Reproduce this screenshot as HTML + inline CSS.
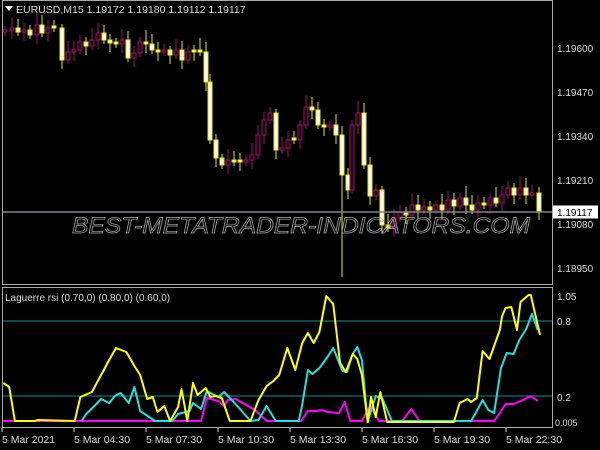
<!DOCTYPE html><html><head><style>
body{margin:0;background:#000;width:600px;height:450px;overflow:hidden;font-family:"Liberation Sans",sans-serif}
svg{position:absolute;left:0;top:0}
</style></head><body>
<svg id="s" width="600" height="450" xmlns="http://www.w3.org/2000/svg">
<rect width="600" height="450" fill="#000"/>
<g id="c"></g>
<line x1="3" y1="212" x2="552" y2="212" stroke="#7a848c" stroke-width="1.5"/>
<text x="72" y="233" font-size="22" font-style="italic" font-family="Liberation Sans" fill="none" stroke="#aaa" stroke-width="0.7" textLength="458" lengthAdjust="spacingAndGlyphs">BEST-METATRADER-INDICATORS.COM</text>
<rect x="2.5" y="0.5" width="550" height="284" fill="none" stroke="#aaa"/>
<rect x="2.5" y="287.5" width="550" height="140" fill="none" stroke="#aaa"/>
<path d="M5 6 L13 6 L9 11Z" fill="#fff"/>
<text x="16" y="13" font-size="10.5" fill="#ddd">EURUSD,M15  1.19172 1.19180 1.19112 1.19117</text>
<g font-size="10" fill="#ddd">
<text x="557" y="52">1.19600</text><text x="557" y="96">1.19470</text><text x="557" y="140">1.19340</text><text x="557" y="184">1.19210</text><text x="557" y="228">1.19080</text><text x="557" y="272">1.18950</text>
<text x="557" y="300">1.05</text><text x="557" y="325">0.8</text><text x="557" y="401">0.2</text><text x="555" y="426" font-size="9">0.005</text>
</g>
<rect x="553" y="205.5" width="45" height="13" fill="#fff"/>
<text x="557" y="216" font-size="10" fill="#000">1.19117</text>
<line x1="3" y1="321" x2="552" y2="321" stroke="#1a8c8c"/>
<line x1="3" y1="396" x2="552" y2="396" stroke="#1a8c8c"/>
<text x="5" y="301" font-size="10" fill="#ddd">Laguerre rsi (0.70,0)  (0.80,0)  (0.60,0)</text>
<g fill="none" stroke-width="2" stroke-linejoin="round">
<polyline class="p" stroke="#ff00ff" points="3,421 175,421 180,398 190,401 195,406 198,400 205,399 222,410 232,421 262,421 268,411 275,411 280,410 285,412 295,413 300,402 305,421 315,421 322,406 330,421 350,421 358,409 365,421 430,421 435,413 440,404 447,404 455,400 462,396 468,401"/>
<polyline class="p" stroke="#22e0e0" points="71,421 75,414 83,405 88,399 95,403 100,396 105,393 112,403 117,387 122,411 135,421 150,421 155,414 165,411 168,403 175,409 180,391 190,397 195,392 205,404 218,421 225,420 232,406 240,421 260,421 263,405 268,370 272,374 278,368 285,357 290,348 298,371 302,372 307,354 311,347 315,360 320,422 327,396 333,399 341,421 410,421 415,411 420,400 425,410 430,413 436,368 441,353 447,354 452,340 458,329 463,314 468,330"/>
<polyline class="p" stroke="#ffff00" points="3,383 8,387 13,421 30,421 33,420 65,421 70,397 80,392 88,375 95,360 101,348 110,352 117,366 122,375 128,399 133,397 137,412 143,406 148,421 155,407 158,389 163,421 168,383 172,395 179,388 183,397 188,396 193,398 200,421 218,421 225,400 232,386 238,381 243,375 250,348 257,370 263,343 268,333 273,343 278,332 284,296 290,304 296,363 301,372 307,354 311,359 315,375 320,422 323,397 327,417 331,392 337,422 395,422 400,403 407,399 410,402 415,398 420,351 426,359 435,330 437,316 440,308 445,307 450,330 453,302 460,295 462,295 470,335"/>
</g>
<g stroke="#ddd"><line x1="2" y1="428" x2="2" y2="432"/><line x1="74" y1="428" x2="74" y2="432"/><line x1="146" y1="428" x2="146" y2="432"/><line x1="218" y1="428" x2="218" y2="432"/><line x1="290" y1="428" x2="290" y2="432"/><line x1="362" y1="428" x2="362" y2="432"/><line x1="434" y1="428" x2="434" y2="432"/><line x1="506" y1="428" x2="506" y2="432"/></g>
<g font-size="10.5" fill="#ddd"><text x="2" y="443">5 Mar 2021</text><text x="74" y="443">5 Mar 04:30</text><text x="146" y="443">5 Mar 07:30</text><text x="218" y="443">5 Mar 10:30</text><text x="290" y="443">5 Mar 13:30</text><text x="362" y="443">5 Mar 16:30</text><text x="434" y="443">5 Mar 19:30</text><text x="506" y="443">5 Mar 22:30</text></g>
</svg>
<script>
(function(){
var pl=document.querySelectorAll('.p');
for(var k=0;k<pl.length;k++){var s=pl[k].getAttribute('points').split(' ').map(function(p){var a=p.split(',');return (a[0]*1.149).toFixed(1)+','+a[1];}).join(' ');pl[k].setAttribute('points',s);}
var pts=[[3,30],[10,28],[16,32],[22,30],[28,35],[35,25],[40,33],[46,28],[52,28],[60,60],[66,52],[72,50],[78,42],[84,46],[90,40],[96,33],[102,40],[108,43],[114,44],[120,40],[126,58],[132,53],[138,42],[144,44],[150,50],[156,52],[162,50],[168,55],[174,50],[180,60],[186,52],[192,52],[198,52],[204,82],[208,140],[214,158],[220,165],[226,160],[232,162],[238,162],[244,160],[250,155],[256,135],[262,120],[268,113],[274,150],[280,148],[286,140],[292,140],[298,125],[304,107],[310,110],[316,125],[322,127],[328,125],[334,135],[340,175],[346,190],[350,125],[356,113],[362,165],[368,196],[374,190],[380,225],[386,228],[392,218],[398,212],[404,215],[410,205],[416,210],[422,207],[428,210],[434,205],[440,210],[446,200],[452,206],[458,198],[464,205],[470,210],[476,203],[482,205],[488,198],[494,203],[500,195],[506,188],[512,195],[518,188],[524,195],[530,193],[537,211]];
var g=document.getElementById('c'),h='',prev=32;
for(var i=0;i<pts.length;i++){var x=pts[i][0],c=pts[i][1],o=prev;if(Math.abs(o-c)<2)o=c-2;
var bt=Math.min(o,c),bb=Math.max(o,c);var up=c<o;var wt=bt-4-((i*7)%9),wb=bb+4+((i*5)%10);
var col=up?'#a0106a':'#e8e800',fill=up?'#1a0010':'#fff';
var wc=col;
if(i==56){wb=277;wc='#e8e800';}
h+='<line x1="'+(x+2)+'" y1="'+wt+'" x2="'+(x+2)+'" y2="'+wb+'" stroke="'+wc+'"/>';
h+='<rect x="'+x+'" y="'+bt+'" width="4" height="'+(bb-bt)+'" fill="'+fill+'" stroke="'+col+'"/>';prev=c;}
g.innerHTML=h;
})();
</script>
</body></html>
